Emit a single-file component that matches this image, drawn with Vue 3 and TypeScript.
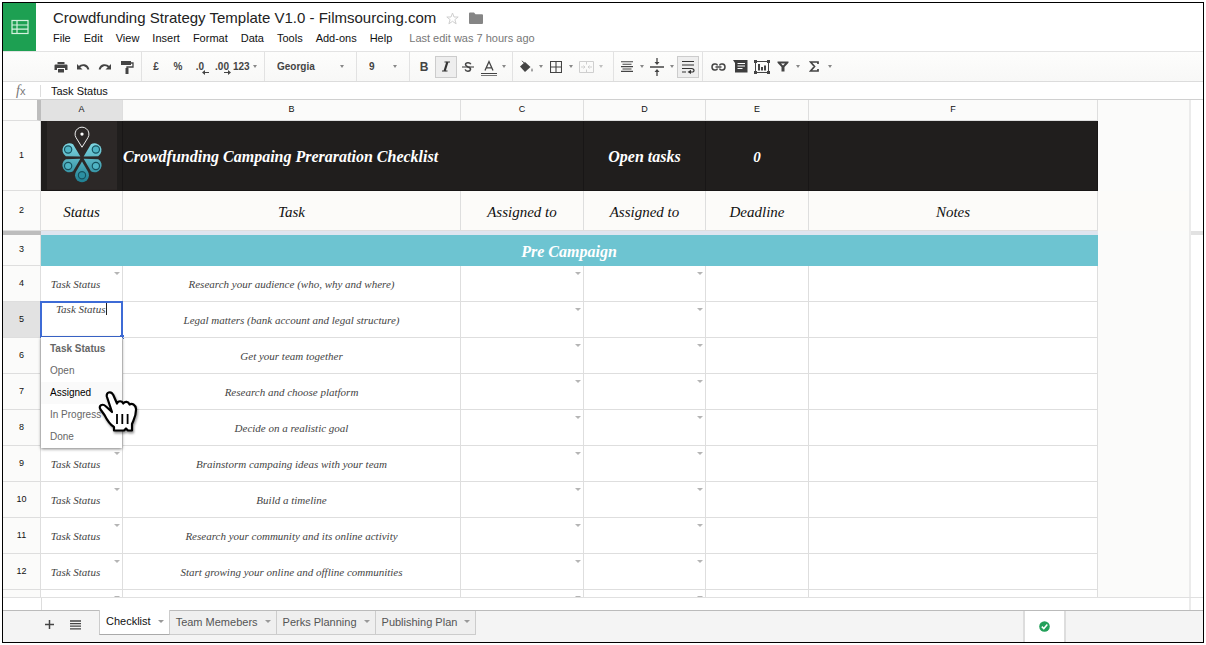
<script setup lang="ts">
import { ref } from 'vue'

interface TaskRow {
  num: number
  task: string
}

const docTitle = 'Crowdfunding Strategy Template V1.0 - Filmsourcing.com'
const menus: string[] = ['File', 'Edit', 'View', 'Insert', 'Format', 'Data', 'Tools', 'Add-ons', 'Help']
const columns: string[] = ['A', 'B', 'C', 'D', 'E', 'F']
const headings: string[] = ['Status', 'Task', 'Assigned to', 'Assigned to', 'Deadline', 'Notes']
const tasks: TaskRow[] = [
  { num: 4, task: 'Research your audience (who, why and where)' },
  { num: 5, task: 'Legal matters (bank account and legal structure)' },
  { num: 6, task: 'Get your team together' },
  { num: 7, task: 'Research and choose platform' },
  { num: 8, task: 'Decide on a realistic goal' },
  { num: 9, task: 'Brainstorm campaing ideas with your team' },
  { num: 10, task: 'Build a timeline' },
  { num: 11, task: 'Research your community and its online activity' },
  { num: 12, task: 'Start growing your online and offline communities' },
]
const options: string[] = ['Task Status', 'Open', 'Assigned', 'In Progress', 'Done']
const tabs: string[] = ['Checklist', 'Team Memebers', 'Perks Planning', 'Publishing Plan']

const activeRow = 5
const hovered = ref('Assigned')
const activeTab = ref('Checklist')
const cellValue = ref('Task Status')
const formula = ref('Task Status')

// The open list spans the three rows below the edited cell.
const isCovered = (num: number): boolean => num > activeRow && num <= activeRow + 3
</script>

<template>
  <div class="frame">
    <header class="top">
      <a class="home" href="#" aria-label="Sheets home">
        <svg width="18" height="16" viewBox="0 0 18 16" fill="none" stroke="#d5f2df" stroke-width="1.2">
          <rect x="1" y="1.5" width="16" height="13" />
          <path d="M1 6h16M1 10.200h16M6 1.500v13" />
        </svg>
      </a>
      <div class="heading">
        <div class="title-line">
          <h1>{{ docTitle }}</h1>
          <button class="bare star" aria-label="Star">
            <svg width="13" height="13" viewBox="0 0 13 13" fill="none" stroke="#cfcfcf">
              <path d="M6.500 1 8 5h4.200L8.900 7.600l1.200 4.200-3.600-2.500-3.600 2.500 1.200-4.200L.8 5H5z" />
            </svg>
          </button>
          <button class="bare" aria-label="Move to folder">
            <svg width="14" height="12" viewBox="0 0 14 12" fill="#858585">
              <path d="M0 1.500Q0 .5 1 .5h4l1.500 1.700H13q1 0 1 1V11q0 1-1 1H1q-1 0-1-1z" />
            </svg>
          </button>
        </div>
        <nav class="menus">
          <button v-for="m in menus" :key="m" class="bare">{{ m }}</button>
          <span class="edited">Last edit was 7 hours ago</span>
        </nav>
      </div>
    </header>

    <div class="toolbar" role="toolbar">
      <div class="group first">
        <button class="tool" aria-label="Print">
          <svg width="14" height="14" viewBox="0 0 14 14" fill="#444">
            <path d="M3.500 2h7v2h-7zM1.500 4.500h11q1 0 1 1V10H11V8H3v2H.5V5.500q0-1 1-1zM4 9h6v3.500H4z" />
          </svg>
        </button>
        <button class="tool" aria-label="Undo">
          <svg width="14" height="14" viewBox="0 0 14 14">
            <path d="M3 7C6 4 11 4.500 12.500 9.500" fill="none" stroke="#444" stroke-width="1.800" />
            <path d="M1 4v5.500h5.500z" fill="#444" />
          </svg>
        </button>
        <button class="tool" aria-label="Redo">
          <svg width="14" height="14" viewBox="0 0 14 14">
            <path d="M11 7C8 4 3 4.500 1.500 9.500" fill="none" stroke="#444" stroke-width="1.800" />
            <path d="M13 4v5.500H7.500z" fill="#444" />
          </svg>
        </button>
        <button class="tool" aria-label="Paint format">
          <svg width="14" height="14" viewBox="0 0 14 14">
            <path d="M1 1h10v4H1z" fill="#444" />
            <path d="M11 3h2v4H7v2" fill="none" stroke="#444" stroke-width="1.300" />
            <path d="M5.500 8h3v6h-3z" fill="#444" />
          </svg>
        </button>
      </div>
      <div class="group">
        <button class="tool">£</button>
        <button class="tool">%</button>
        <button class="tool decimal" aria-label="Decrease decimal places">
          <span>.0</span>
          <svg width="7" height="5" viewBox="0 0 7 5"><path d="M7 2.500H2" stroke="#444" /><path d="M0 2.500 3 0v5z" fill="#444" /></svg>
        </button>
        <button class="tool decimal" aria-label="Increase decimal places">
          <span>.00</span>
          <svg width="7" height="5" viewBox="0 0 7 5"><path d="M0 2.500h5" stroke="#444" /><path d="M7 2.500 4 0v5z" fill="#444" /></svg>
        </button>
        <button class="tool formats">123<i class="caret"></i></button>
      </div>
      <div class="group picker">
        <select class="font" aria-label="Font"><option>Georgia</option></select>
        <i class="caret"></i>
      </div>
      <div class="group picker">
        <select class="size" aria-label="Font size"><option>9</option></select>
        <i class="caret"></i>
      </div>
      <div class="group">
        <button class="tool big">B</button>
        <button class="tool on" aria-label="Italic">
          <svg width="10" height="11" viewBox="0 0 10 11" fill="none" stroke="#333">
            <path d="M3.500 1h5.500M1 10h5.500" stroke-width="1.200" /><path d="M6.400 1 3.600 10" stroke-width="2.200" />
          </svg>
        </button>
        <button class="tool" aria-label="Strikethrough">
          <svg width="12" height="12" viewBox="0 0 12 12" fill="none" stroke="#444" stroke-width="1.500">
            <path d="M8.800 3.200C8 1.300 3.600 1.200 3.500 3.600 3.500 5 5 5.400 6.200 6 8 6.600 8.700 7.200 8.500 8.500 8 10.800 3.700 10.700 3.200 8.300" />
            <path d="M0 6h12" stroke-width="1.100" />
          </svg>
        </button>
        <button class="tool narrow" aria-label="Text color">
          <svg width="18" height="18" viewBox="0 0 18 18" fill="none" stroke="#444">
            <path d="M5 12.500 9 3.500l4 9M6.300 9.800h5.400" stroke-width="1.300" />
            <path d="M1 15.500h16" /><path d="M1 17.500h16" stroke="#777" />
          </svg>
        </button>
        <button class="drop" aria-label="Text color options"><i class="caret"></i></button>
      </div>
      <div class="group roomy">
        <button class="tool narrow" aria-label="Fill color">
          <svg width="15" height="14" viewBox="0 0 15 14">
            <path d="M1 6.500 6 2l5.500 5L6 12z" fill="#444" />
            <path d="M3 .8l5 5M3.500 5.500h5" stroke="#444" fill="none" />
            <path d="M13 8q2 3 0 3.800Q11 11 13 8z" fill="#999" />
          </svg>
        </button>
        <button class="drop" aria-label="Fill color options"><i class="caret"></i></button>
        <button class="tool narrow" aria-label="Borders">
          <svg width="12" height="12" viewBox="0 0 12 12" fill="none" stroke="#444">
            <path d="M.5.5h11v11H.5zM6 .5v11M.5 6h11" stroke-width="1.100" />
          </svg>
        </button>
        <button class="drop" aria-label="Border options"><i class="caret"></i></button>
        <button class="tool narrow" aria-label="Merge cells">
          <svg width="15" height="12" viewBox="0 0 15 12" fill="none" stroke="#cfcfcf">
            <path d="M.5 3V.5h14V3M.5 9v2.500h14V9M.5 3v6M14.500 3v6M7.500 0v3.500M7.500 8.500V12M2 6h4M13 6H9M4.500 4.500 6 6 4.500 7.500M10.500 4.500 9 6l1.500 1.500" />
          </svg>
        </button>
        <button class="drop pale" aria-label="Merge options"><i class="caret"></i></button>
      </div>
      <div class="group">
        <button class="tool narrow" aria-label="Horizontal align">
          <svg width="12" height="11" viewBox="0 0 12 11" stroke="#444" stroke-width="1.100">
            <path d="M0 .8h12M1.500 3.200h9M0 5.600h12M1.500 8h9M0 10.400h12" />
          </svg>
        </button>
        <button class="drop" aria-label="Horizontal align options"><i class="caret"></i></button>
        <button class="tool narrow" aria-label="Vertical align">
          <svg width="14" height="18" viewBox="0 0 14 18">
            <path d="M0 9h14M7 0v5M7 13v5" stroke="#444" stroke-width="1.300" />
            <path d="M4.500 4h5L7 7zM4.500 14h5L7 11z" fill="#444" />
          </svg>
        </button>
        <button class="drop" aria-label="Vertical align options"><i class="caret"></i></button>
        <button class="tool on" aria-label="Wrap text">
          <svg width="14" height="14" viewBox="0 0 14 14">
            <path d="M1 1.500h12M1 5h12M1 8.500h9.500q2.500.3 2.500 2T10.500 12H9M1 12h4" fill="none" stroke="#333" stroke-width="1.200" />
            <path d="M6.500 12 10 9.700v4.300z" fill="#333" />
          </svg>
        </button>
      </div>
      <div class="group last">
        <button class="tool" aria-label="Insert link">
          <svg width="15" height="8" viewBox="0 0 15 8" fill="none" stroke="#444" stroke-width="1.500">
            <path d="M6.500 2.500Q6 1 4.500 1H3.500Q1 1.200 1 4t2.500 3h1Q6 7 6.500 5.500M8.500 2.500Q9 1 10.500 1h1Q14 1.200 14 4t-2.500 3h-1Q9 7 8.500 5.500M4.500 4h6" />
          </svg>
        </button>
        <button class="tool" aria-label="Insert comment">
          <svg width="15" height="13" viewBox="0 0 15 13">
            <path d="M0 0h14.500v12.500H2V3z" fill="#3d3d3d" />
            <path d="M4.500 3.500h7.500M4.500 6h7.500M4.500 8.500h5" stroke="#fff" />
          </svg>
        </button>
        <button class="tool" aria-label="Insert chart">
          <svg width="16" height="14" viewBox="0 0 16 14">
            <path d="M1.500 1.500h13v11h-13z" fill="none" stroke="#444" />
            <path d="M0 0h3v3H0zM13 0h3v3h-3zM0 11h3v3H0zM13 11h3v3h-3zM4 4h2v6.500H4zM7 7h2v3.500H7zM10 5.500h2v5h-2z" fill="#444" />
          </svg>
        </button>
        <button class="tool narrow" aria-label="Filter">
          <svg width="12" height="11" viewBox="0 0 12 11">
            <path d="M.5.5h11v1.300L7.500 6v4.500h-3V6L.5 1.800z" fill="#444" />
            <path d="M4 2.500h4L6 4.500z" fill="#fff" />
          </svg>
        </button>
        <button class="drop" aria-label="Filter options"><i class="caret"></i></button>
        <button class="tool" aria-label="Functions">
          <svg width="10" height="11" viewBox="0 0 10 11" fill="none" stroke="#444" stroke-width="1.700">
            <path d="M9 3V1H1.500L5.500 5.500 1.500 10H9V8" />
          </svg>
        </button>
        <button class="drop" aria-label="Function options"><i class="caret"></i></button>
      </div>
    </div>

    <div class="formula">
      <label for="fx"><em>f</em>x</label>
      <input id="fx" v-model="formula" type="text" />
    </div>

    <main class="sheet">
      <div class="viewport">
        <table>
          <colgroup>
            <col class="c-num" /><col class="c-a" /><col class="c-b" /><col class="c-c" />
            <col class="c-d" /><col class="c-e" /><col class="c-f" /><col />
          </colgroup>
          <thead>
            <tr class="letters">
              <th class="corner"></th>
              <th v-for="c in columns" :key="c" scope="col" :class="{ picked: c === 'A' }">{{ c }}</th>
              <td class="void"></td>
            </tr>
          </thead>
          <tbody>
            <tr class="banner">
              <th scope="row">1</th>
              <td class="logo-cell">
                <svg class="logo" width="70" height="69" viewBox="141 78 212 208" aria-hidden="true">
                  <defs>
                    <linearGradient id="teal" gradientUnits="userSpaceOnUse" x1="0" y1="140" x2="0" y2="266">
                      <stop offset="0" stop-color="#84dbe6" /><stop offset="1" stop-color="#1d7d90" />
                    </linearGradient>
                  </defs>
                  <rect x="141" y="78" width="212" height="208" fill="#2c2827" />
                  <g fill="url(#teal)">
                    <path d="M242 185 198 184A21 21 0 1 1 220 148z" />
                    <path d="M252 185 296 184A21 21 0 1 0 274 148z" />
                    <path d="M242 192 198 193A21 21 0 1 0 220 230z" />
                    <path d="M252 192 296 193A21 21 0 1 1 274 230z" />
                    <path d="M247 200 265.200 231.500A21 21 0 1 1 228.800 231.500z" />
                  </g>
                  <g fill="#4fb4c4" stroke="#16525f" stroke-width="3.500">
                    <circle cx="205" cy="164" r="11" /><circle cx="289" cy="164" r="11" />
                    <circle cx="205" cy="214" r="11" /><circle cx="289" cy="214" r="11" />
                    <circle cx="247" cy="242" r="11" fill="#2b8fa2" />
                  </g>
                  <path d="M247 157 229 128A21 21 0 1 1 265 128z" fill="none" stroke="#eee" stroke-width="3" />
                  <circle cx="247" cy="117" r="5" fill="#fff" />
                </svg>
              </td>
              <td colspan="2" class="sheet-title">Crowdfunding Campaing Preraration Checklist</td>
              <td>Open tasks</td>
              <td class="count">0</td>
              <td></td>
              <td class="void"></td>
            </tr>
            <tr class="labels">
              <th scope="row">2</th>
              <td v-for="(h, i) in headings" :key="i">{{ h }}</td>
              <td class="void"></td>
            </tr>
            <tr class="freeze">
              <th></th>
              <td colspan="6"></td>
              <td class="void"></td>
            </tr>
            <tr class="section">
              <th scope="row">3</th>
              <td colspan="6">Pre Campaign</td>
              <td class="void"></td>
            </tr>
            <tr v-for="t in tasks" :key="t.num" class="task">
              <th scope="row" :class="{ picked: t.num === activeRow }">{{ t.num }}</th>
              <td class="status">
                <template v-if="t.num === activeRow">
                  <div class="editor">
                    <input v-model="cellValue" type="text" aria-label="Cell A5" />
                  </div>
                  <ul class="popup" role="listbox" aria-label="Status">
                    <li
                      v-for="(o, i) in options"
                      :key="o"
                      role="option"
                      :aria-selected="i === 0"
                      :class="{ current: i === 0, hover: o === hovered }"
                      @mouseenter="hovered = o"
                    >{{ o }}</li>
                  </ul>
                  <svg class="pointer" width="40" height="44" viewBox="0 0 40 44" aria-hidden="true">
                    <path
                      d="M14 22 9 7C7.500 2 13 .5 15.300 5L19 13.500C20 10.500 24 10.500 25.300 13.500 27 11 30.500 11.500 31.500 14.500 34 13 37.500 14.500 38 19 38.300 26 36 29 34 34V40.500H30L28 38.500 26 40.500H16V37C11 34 9 30 6.500 25L2.500 19.500C0 15.500 4.500 13 8 16.500z"
                      fill="#fff" stroke="#000" stroke-width="2.200" stroke-linejoin="round"
                    />
                    <path d="M19 24v10M24.300 24v10M29.600 24v10" stroke="#000" stroke-width="1.800" />
                  </svg>
                </template>
                <template v-else-if="!isCovered(t.num)">Task Status<i class="caret"></i></template>
              </td>
              <td>{{ t.task }}</td>
              <td><i class="caret"></i></td>
              <td><i class="caret"></i></td>
              <td></td>
              <td></td>
              <td class="void"></td>
            </tr>
            <tr class="task">
              <th></th>
              <td><i class="caret"></i></td>
              <td></td>
              <td><i class="caret"></i></td>
              <td><i class="caret"></i></td>
              <td></td>
              <td></td>
              <td class="void"></td>
            </tr>
          </tbody>
        </table>
      </div>
      <div class="rail"><div class="rail-top"></div></div>
    </main>
    <div class="hscroll"><div class="hscroll-start"></div><div class="hscroll-track"></div></div>

    <footer class="tabs">
      <button class="bare add" aria-label="Add sheet">
        <svg width="9" height="9" viewBox="0 0 9 9" stroke="#444" stroke-width="1.500"><path d="M4.500 0v9M0 4.500h9" /></svg>
      </button>
      <button class="bare all" aria-label="All sheets">
        <svg width="11" height="10" viewBox="0 0 11 10" stroke="#444" stroke-width="1.300"><path d="M0 1h11M0 3.600h11M0 6.200h11M0 8.800h11" /></svg>
      </button>
      <div class="tab-list">
        <button v-for="t in tabs" :key="t" class="tab" :class="{ active: t === activeTab }" @click="activeTab = t">
          {{ t }}<i class="caret"></i>
        </button>
      </div>
      <div class="saved">
        <svg width="11" height="11" viewBox="0 0 11 11">
          <circle cx="5.500" cy="5.500" r="5.300" fill="#23a05a" />
          <path d="M2.800 5.600 4.800 7.600 8.300 3.600" fill="none" stroke="#fff" stroke-width="1.500" />
        </svg>
      </div>
    </footer>
  </div>
</template>

<style>
body {
  margin: 0;
  background: #fff;
}
</style>

<style scoped>
* {
  box-sizing: border-box;
}
.frame {
  display: flex;
  flex-direction: column;
  height: calc(100vh - 4px);
  margin: 2px;
  border: 1px solid #000;
  overflow: hidden;
  background: #fff;
  font-family: "Liberation Sans", Arial, sans-serif;
  font-size: 11px;
  color: #222;
}
button,
input,
select {
  margin: 0;
  padding: 0;
  border: 0;
  background: none;
  font: inherit;
  color: inherit;
  outline: 0;
}
svg {
  display: block;
  flex: none;
}
.bare {
  display: flex;
  align-items: center;
}
.caret {
  display: block;
  flex: none;
  width: 0;
  height: 0;
  border: 3px solid transparent;
  border-top-color: #999;
  border-bottom-width: 0;
}

.top {
  display: flex;
  flex: none;
  height: 48px;
}
.home {
  display: flex;
  align-items: center;
  justify-content: center;
  width: 33px;
  background: #1da052;
}
.heading {
  padding: 5px 0 0 17px;
}
.title-line {
  display: flex;
  align-items: center;
  gap: 10px;
  height: 20px;
}
h1 {
  margin: 0;
  font-size: 15px;
  font-weight: 400;
  line-height: 20px;
}
.menus {
  display: flex;
  gap: 13px;
  height: 20px;
  line-height: 20px;
  color: #111;
}
.edited {
  margin-left: 4px;
  color: #777;
}

.toolbar {
  display: flex;
  flex: none;
  height: 31px;
  border-top: 1px solid #e3e3e3;
  border-bottom: 1px solid #dcdcdc;
  background: linear-gradient(#fdfdfc, #f8f8f7);
}
.group {
  display: flex;
  align-items: center;
  padding: 0 3px;
  border-right: 1px solid #e2e2e2;
}
.group.first {
  padding-left: 47px;
}
.group.roomy {
  padding-right: 7px;
}
.group.last {
  padding-left: 4px;
  border-right: 0;
}
.tool {
  display: flex;
  align-items: center;
  justify-content: center;
  width: 22px;
  height: 22px;
  font-size: 10px;
  font-weight: 700;
  color: #444;
}
.tool.narrow {
  width: 20px;
}
.tool.big {
  font-size: 12px;
}
.tool.on {
  border: 1px solid #ccc;
  background: #eee;
}
.tool.decimal {
  position: relative;
}
.tool.decimal svg {
  position: absolute;
  right: 2px;
  bottom: 3px;
}
.tool.formats {
  justify-content: flex-start;
  width: 28px;
  gap: 3px;
}
.formats .caret,
.drop .caret,
.picker .caret {
  border-width: 3px 2px 0;
  border-top-color: #888;
}
.drop {
  display: flex;
  align-items: center;
  justify-content: center;
  width: 10px;
  height: 22px;
}
.drop.pale {
  opacity: 0.5;
}
.picker {
  padding: 0 12px;
}
.picker select {
  appearance: none;
  font-size: 10px;
  font-weight: 700;
  color: #444;
}
.font {
  width: 63px;
}
.size {
  width: 24px;
}

.formula {
  display: flex;
  flex: none;
  align-items: center;
  height: 18px;
  border-bottom: 1px solid #d0d0d0;
}
.formula label {
  width: 38px;
  padding-left: 13px;
  border-right: 1px solid #ddd;
  color: #777;
  line-height: 12px;
}
.formula em {
  font-family: "Liberation Serif", serif;
  font-size: 14px;
}
.formula input {
  flex: 1;
  padding-left: 10px;
  color: #111;
}

.sheet {
  display: flex;
  flex: 1;
  min-height: 0;
}
.viewport {
  flex: 1;
  overflow: hidden;
}
table {
  width: 100%;
  table-layout: fixed;
  border-spacing: 0;
}
.c-num {
  width: 38px;
}
.c-a {
  width: 82px;
}
.c-b {
  width: 338px;
}
.c-c {
  width: 123px;
}
.c-d {
  width: 122px;
}
.c-e {
  width: 103px;
}
.c-f {
  width: 289px;
}
th,
td {
  position: relative;
  padding: 0;
  border-right: 1px solid #dedede;
  border-bottom: 1px solid #dedede;
  text-align: center;
}
th {
  background: #fbfbfa;
  font-size: 9px;
  font-weight: 400;
  color: #111;
}
tbody th {
  padding-bottom: 2px;
}
th.picked {
  background: #e2e2e2;
}
td {
  font-family: "Liberation Serif", serif;
  font-style: italic;
}
td.void {
  border: 0;
  background: #fbfbfa;
}
.letters th {
  height: 21px;
  padding-bottom: 3px;
}
.letters .corner {
  border-right: 4px solid #bdbdbd;
}
.banner td {
  height: 70px;
  padding-top: 3px;
  border-color: #181616;
  background: #201e1d;
  font-size: 16px;
  font-weight: 700;
  color: #fff;
}
.banner .logo-cell {
  padding-top: 0;
}
.banner .count {
  font-size: 15px;
}
.banner .void,
.freeze .void,
.section .void {
  background: #fbfbfa;
}
.banner .sheet-title {
  text-align: left;
}
.logo {
  margin: 0 auto;
}
.labels td {
  height: 40px;
  padding-top: 3px;
  background: #fcfbf9;
  font-size: 15px;
  color: #111;
}
.freeze th,
.freeze td {
  height: 4px;
  padding: 0;
  border: 0;
}
.freeze th {
  background: #bdbdbd;
}
.freeze td {
  background: #dfe5ef;
}
.section td {
  height: 31px;
  padding-top: 3px;
  border-color: #6dc4d1;
  background: #6dc4d1;
  font-size: 16px;
  font-weight: 700;
  color: #fff;
}
.task td {
  height: 36px;
  font-size: 11px;
  color: #444;
}
.task .status {
  padding-right: 12px;
}
.task td > .caret {
  position: absolute;
  top: 6px;
  right: 2px;
  border-top-color: #b5b5b5;
}
.editor {
  position: absolute;
  inset: -1px -1px -1px -1px;
  border: 2px solid #3d6bd6;
  background: #fff;
}
.editor::after {
  content: "";
  position: absolute;
  right: -3px;
  bottom: -3px;
  width: 4px;
  height: 4px;
  background: #3d6bd6;
}
.editor input {
  display: block;
  width: 51px;
  height: 12px;
  margin: 0 auto;
  border-right: 1px solid #222;
  font-style: italic;
}
.popup {
  position: absolute;
  z-index: 2;
  top: 100%;
  left: 0;
  width: 100%;
  margin: 0;
  padding: 1px 0 0;
  background: #fff;
  box-shadow: 0 1px 3px rgba(0, 0, 0, 0.5);
  font-family: "Liberation Sans", Arial, sans-serif;
  font-size: 10px;
  font-style: normal;
  line-height: 22px;
  list-style: none;
  text-align: left;
  color: #666;
}
.popup li {
  padding-left: 9px;
}
.popup .current {
  font-weight: 700;
}
.popup .hover {
  background: #fafafa;
  color: #000;
}
.pointer {
  position: absolute;
  z-index: 3;
  top: 88px;
  left: 57px;
  filter: drop-shadow(1px 2px 1px rgba(0, 0, 0, 0.4));
}
.rail {
  flex: none;
  width: 14px;
  border-left: 2px solid #ebebeb;
}
.rail-top {
  height: 135px;
  border-bottom: 4px solid #e2e2e2;
}
.hscroll {
  display: flex;
  flex: none;
  height: 14px;
  border-top: 1px solid #e0e0e0;
  border-bottom: 1px solid #bbb;
}
.hscroll-start {
  width: 39px;
  border-right: 1px solid #ddd;
}
.hscroll-track {
  flex: 1;
  margin-right: 12px;
  border-right: 2px solid #ebebeb;
}

.tabs {
  display: flex;
  flex: none;
  height: 31px;
  background: #f4f4f4;
}
.add {
  padding: 0 16px 4px 42px;
}
.all {
  padding: 0 18px 4px 0;
}
.tab-list {
  display: flex;
  flex: 1;
  align-items: flex-start;
}
.tab {
  display: flex;
  align-items: center;
  gap: 7px;
  height: 24px;
  padding: 0 5px 2px 6px;
  border: 1px solid #ccc;
  border-top: 0;
  border-left: 0;
  background: #efefef;
  color: #555;
}
.tab.active {
  height: 25px;
  margin-top: -1px;
  border-bottom-color: #aaa;
  border-left: 1px solid #ccc;
  background: #fff;
  color: #111;
}
.saved {
  display: flex;
  align-items: center;
  justify-content: center;
  width: 43px;
  margin-right: 137px;
  border-right: 2px solid #ddd;
  border-left: 2px solid #ddd;
  background: #fff;
}
</style>
